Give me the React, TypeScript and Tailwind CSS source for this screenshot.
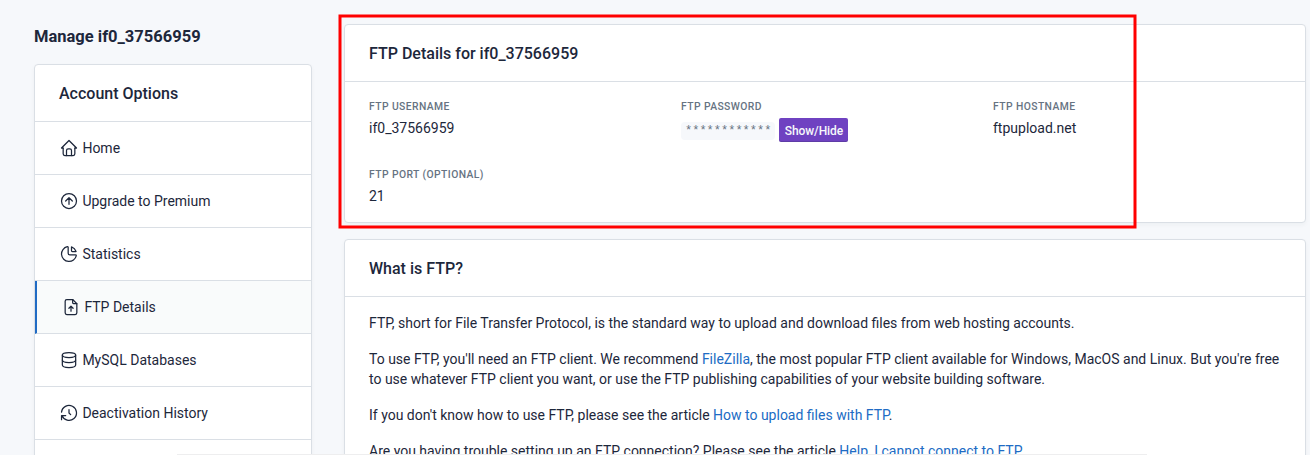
import type { ReactNode } from 'react';

const icons: Record<string, ReactNode> = {
  home: (
    <>
      <path d="M5 12H3l9-9 9 9h-2" />
      <path d="M5 12v7a2 2 0 0 0 2 2h10a2 2 0 0 0 2-2v-7" />
      <path d="M9 21v-6a2 2 0 0 1 2-2h2a2 2 0 0 1 2 2v6" />
    </>
  ),
  upgrade: (
    <>
      <circle cx="12" cy="12" r="9" />
      <path d="M12 8l-4 4M12 8v8M16 12l-4-4" />
    </>
  ),
  stats: (
    <>
      <path d="M10 3.2A9 9 0 1 0 20.8 14a1 1 0 0 0-1-1H13a2 2 0 0 1-2-2V4a.9.9 0 0 0-1-.8" />
      <path d="M15 3.5A9 9 0 0 1 20.5 9H16a1 1 0 0 1-1-1V3.5" />
    </>
  ),
  file: (
    <>
      <path d="M14 3v4a1 1 0 0 0 1 1h4" />
      <path d="M17 21H7a2 2 0 0 1-2-2V5a2 2 0 0 1 2-2h7l5 5v11a2 2 0 0 1-2 2z" />
      <path d="M12 11v6M9.5 13.5L12 11l2.5 2.5" />
    </>
  ),
  database: (
    <>
      <ellipse cx="12" cy="6" rx="8" ry="3" />
      <path d="M4 6v6a8 3 0 0 0 16 0V6" />
      <path d="M4 12v6a8 3 0 0 0 16 0v-6" />
    </>
  ),
  history: (
    <>
      <path d="M12 8v4l2 2" />
      <path d="M3.05 11a9 9 0 1 1 .5 4m-.5 5v-5h5" />
    </>
  ),
};

const menu = [
  { icon: 'home', label: 'Home' },
  { icon: 'upgrade', label: 'Upgrade to Premium' },
  { icon: 'stats', label: 'Statistics' },
  { icon: 'file', label: 'FTP Details', active: true },
  { icon: 'database', label: 'MySQL Databases' },
  { icon: 'history', label: 'Deactivation History' },
];

function Icon({ name }: { name: string }) {
  return (
    <svg
      className="size-5 shrink-0"
      viewBox="0 0 24 24"
      fill="none"
      stroke="currentColor"
      strokeWidth="1.5"
      strokeLinecap="round"
      strokeLinejoin="round"
    >
      {icons[name]}
    </svg>
  );
}

function Card({ title, children }: { title: string; children: ReactNode }) {
  return (
    <section className="rounded border border-[#dadfe5] bg-white shadow-[0_2px_4px_0_rgba(30,41,59,0.04)]">
      <h3 className="border-b border-[#dadfe5] px-6 pt-[17px] pb-[15px] text-base font-medium">{title}</h3>
      {children}
    </section>
  );
}

function Field({ label, children }: { label: string; children: ReactNode }) {
  return (
    <div>
      <div className="mb-[3px] pt-px text-[10.35px] leading-4 font-medium tracking-[0.04em] text-[#667382] uppercase">
        {label}
      </div>
      <div>{children}</div>
    </div>
  );
}

function Link({ children }: { children: ReactNode }) {
  return (
    <a href="#" className="text-[#206bc4]">
      {children}
    </a>
  );
}

export default function App() {
  return (
    <div className="relative flex h-[455px] w-[1310px] items-start gap-8 overflow-hidden bg-[#f6f8fb] pl-[34px] font-['Roboto',sans-serif] text-sm leading-5 text-[#1d273b]">
      <aside className="w-[278px] shrink-0 pt-[25px]">
        <h2 className="mb-[15px] text-[16.5px] leading-6 font-bold">Manage if0_37566959</h2>
        <Card title="Account Options">
          <nav>
            {menu.map((item) => (
              <a
                key={item.label}
                href="#"
                className={
                  item.active
                    ? 'flex h-[53px] items-center gap-[3.4px] border-b border-l-2 border-b-[#dadfe5] border-l-[#206bc4] bg-[#f9fbfb] px-6'
                    : 'flex h-[53px] items-center gap-[3.4px] border-b border-[#dadfe5] px-6'
                }
              >
                <Icon name={item.icon} />
                {item.label}
              </a>
            ))}
          </nav>
          <div className="h-[53px]" />
        </Card>
      </aside>

      <main className="flex w-[962px] shrink-0 flex-col gap-4 pt-6">
        <Card title="FTP Details for if0_37566959">
          <div className="grid grid-cols-3 gap-6 px-6 py-4">
            <Field label="FTP Username">if0_37566959</Field>
            <Field label="FTP Password">
              <div className="flex h-6 items-start gap-1">
                <code className="mt-1 h-[18px] rounded bg-[#f6f8fb] px-1 font-['Liberation_Mono',monospace] text-xs leading-[18px] text-[#667382]">
                  ************
                </code>
                <button className="h-6 w-[69px] rounded-xs bg-[#6f42c1] pt-px text-center text-xs font-medium tracking-[-0.1px] text-[#f6f8fb] shadow-[inset_0_-1px_0_rgba(30,41,59,0.2)]">
                  Show/Hide
                </button>
              </div>
            </Field>
            <Field label="FTP Hostname">ftpupload.net</Field>
            <Field label="FTP Port (optional)">21</Field>
          </div>
        </Card>
        <Card title="What is FTP?">
          <div className="flex flex-col gap-4 px-6 py-4">
            <p>
              FTP, short for File Transfer Protocol, is the standard way to upload and download files from web hosting
              accounts.
            </p>
            <p>
              To use FTP, you'll need an FTP client. We recommend <Link>FileZilla</Link>, the most popular FTP client
              available for Windows, MacOS and Linux. But you're free to use whatever FTP client you want, or use the
              FTP publishing capabilities of your website building software.
            </p>
            <p>
              If you don't know how to use FTP, please see the article <Link>How to upload files with FTP</Link>.
            </p>
            <p>
              Are you having trouble setting up an FTP connection? Please see the article{' '}
              <Link>Help, I cannot connect to FTP</Link>.
            </p>
          </div>
        </Card>
      </main>

      <div className="absolute bottom-0 left-[177px] h-px w-[970px] bg-[#eeeeef]" />
      <svg className="pointer-events-none absolute top-0 left-0" width="1310" height="455" fill="none">
        <rect x="340" y="16" width="795" height="211" stroke="#ff0000" strokeWidth="3" />
      </svg>
    </div>
  );
}
